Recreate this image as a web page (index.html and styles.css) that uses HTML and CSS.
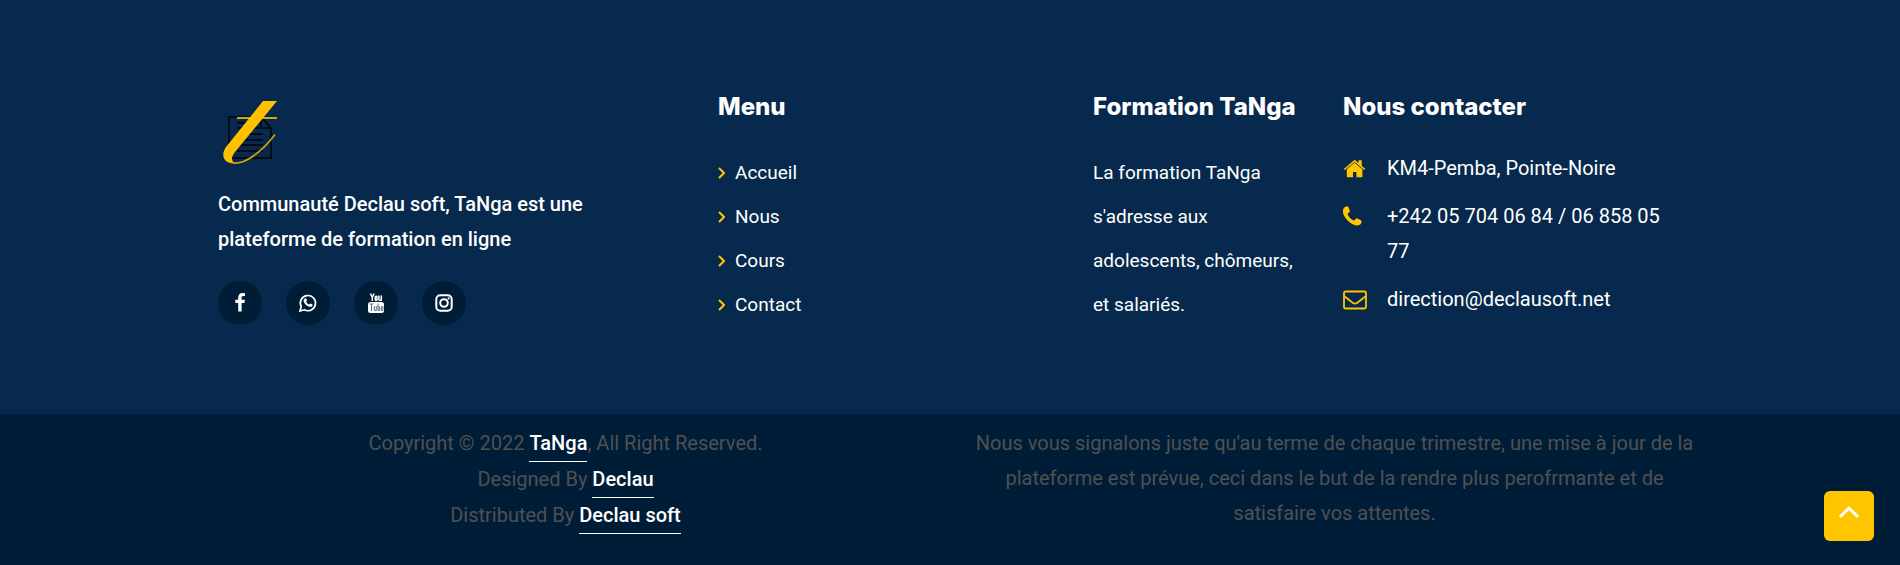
FILE: index.html
```html
<!DOCTYPE html>
<html lang="fr">
<head>
<meta charset="utf-8">
<meta name="viewport" content="width=device-width, initial-scale=1">
<title>TaNga</title>
<link rel="stylesheet" href="styles.css">
</head>
<body>
<footer class="footer">
  <div class="footer-top">
    <section class="about">
      <a class="logo" href="#" aria-label="TaNga">
        <svg width="80" height="80" viewBox="0 0 80 80">
          <g fill="none" stroke="#020b18" stroke-width="2">
            <path d="M19 67V26h32l10 11v30z"/>
            <path d="M51 26v11h10M27 32h20M27 37h25M27 43h26M27 49h26M27 54h26M27 60h26" stroke-width="2"/>
          </g>
          <path d="M27 27h40" stroke="#d9a506" stroke-width="2"/>
          <path d="M53 10h14L25 61c-4 5-4 9 0 11h-4c-8-1-10-9-5-16z" fill="#ffc000"/>
          <path d="M21 71.500c13 4 32-12 44-28" fill="none" stroke="#d9a506" stroke-width="1.600"/>
        </svg>
      </a>
      <p class="lead">Communauté Declau soft, TaNga est une plateforme de formation en ligne</p>
      <nav class="social" aria-label="Réseaux sociaux">
        <a href="#" aria-label="Facebook"><svg width="20" height="20" viewBox="0 0 1792 1792"><path fill="currentColor" d="M1343 12v264h-157q-86 0-116 36t-30 108v189h293l-39 296h-254v759H734V905H479V609h255V391q0-186 104-288.500T1115 0q147 0 228 12z"/></svg></a>
        <a href="#" aria-label="WhatsApp"><svg width="20" height="20" viewBox="0 0 20 20"><path d="M2 18l1.200-4.300A7.600 7.600 0 1 1 6.300 16.800z" fill="none" stroke="currentColor" stroke-width="1.700"/><path fill="currentColor" d="M7 5.500c.6-.4 1.200-.3 1.400.3l.6 1.500c.1.500-.6 1-.8 1.400.7 1.400 1.700 2.300 3.100 2.900.5-.2.900-1.200 1.500-1l1.600.8c.4.300.2 1.300-.3 1.800-1 .9-2.500.8-4 .1-2-.9-3.400-2.400-4.200-4.200-.6-1.500-.3-2.800 1.100-3.600z"/></svg></a>
        <a href="#" aria-label="YouTube"><svg width="20" height="20" viewBox="0 0 20 20"><g fill="none" stroke="currentColor" stroke-width="1.500"><path d="M4.500.5l1.800 4v3.500M8.100.5l-1.800 4"/><rect x="9.300" y="3.200" width="1.700" height="4.200" rx=".8"/><path d="M12.900 2.500v4q0 1 1 1l1.300-1M15.300 2.500v5.500"/></g><rect x="2" y="9" width="16" height="11" rx="2.500" fill="currentColor"/><g fill="none" stroke="#5c6f83" stroke-width="1"><path d="M3.500 11h4M5.500 11v7M8.300 13v4.500h2V13M12 10.500v7h1.600v-3.700H12M17 16.500v1h-1.700v-3.700H17v2h-1.700"/></g></svg></a>
        <a href="#" aria-label="Instagram"><svg width="20" height="20" viewBox="0 0 20 20"><g fill="none" stroke="currentColor" stroke-width="2"><rect x="2.300" y="2.300" width="15.400" height="15.400" rx="4"/><circle cx="10" cy="10" r="3.800"/></g><circle cx="14.600" cy="5.400" r="1.100" fill="currentColor"/></svg></a>
      </nav>
    </section>
    <section class="col">
      <h4>Menu</h4>
      <ul class="links">
        <li><a href="#"><svg width="7" height="12" viewBox="0 0 7 12"><path d="M1 1l5 5-5 5"/></svg>Accueil</a></li>
        <li><a href="#"><svg width="7" height="12" viewBox="0 0 7 12"><path d="M1 1l5 5-5 5"/></svg>Nous</a></li>
        <li><a href="#"><svg width="7" height="12" viewBox="0 0 7 12"><path d="M1 1l5 5-5 5"/></svg>Cours</a></li>
        <li><a href="#"><svg width="7" height="12" viewBox="0 0 7 12"><path d="M1 1l5 5-5 5"/></svg>Contact</a></li>
      </ul>
    </section>
    <section class="col">
      <h4>Formation TaNga</h4>
      <p class="formation">La formation TaNga s'adresse aux adolescents, chômeurs, et salariés.</p>
    </section>
    <section class="col">
      <h4>Nous contacter</h4>
      <ul class="contact">
        <li><svg width="24" height="24" viewBox="0 0 24 24" fill="currentColor"><path d="M11.500 5.800l-7.700 6.500v7.200q0 .8.800.8H10v-5.400h3.400v5.400h5.200q.8 0 .8-.8v-7.200z"/><path d="M.8 12L11.100 3.300q.6-.5 1.200 0L15.500 6V3.300h3.200v5.400l3.600 3.200-1 1.100L11.700 4.900 1.700 13z"/></svg><span>KM4-Pemba, Pointe-Noire</span></li>
        <li><svg width="24" height="24" viewBox="0 0 24 24" fill="currentColor"><path d="M2 2c1.800-1.200 3-1.200 3.600.4l1.200 3.400c.5 1.500-2.200 2.100-2.100 3.600 1 2.500 3.400 4.900 5.900 6 1.600.1 2.400-2.800 3.900-2l3.400 1.900c1.400.8.500 3.400-.7 4.200-2 1.200-4.300 1.300-7-.1C6 17.300 2.600 14.100.7 9.900-.7 6.300-.2 3.500 2 2z"/></svg><span>+242 05 704 06 84 / 06 858 05 77</span></li>
        <li><svg width="24" height="24" viewBox="0 0 24 24" fill="none" stroke="currentColor" stroke-width="1.800"><rect x="1" y="3.500" width="22" height="17" rx="1.500"/><path d="M1 8l9 7q2 1.300 4 0l9-7"/></svg><span>direction@declausoft.net</span></li>
      </ul>
    </section>
  </div>
  <div class="copyright">
    <div>
      <p>Copyright © 2022 <a href="#">TaNga</a>, All Right Reserved.</p>
      <p>Designed By <a href="#">Declau</a></p>
      <p>Distributed By <a href="#">Declau soft</a></p>
    </div>
    <p>Nous vous signalons juste qu'au terme de chaque trimestre, une mise à jour de la plateforme est prévue, ceci dans le but de la rendre plus perofrmante et de satisfaire vos attentes.</p>
  </div>
</footer>
<button class="to-top" type="button" aria-label="Haut de page"><svg width="24" height="24" viewBox="0 0 24 24"><path d="M3 15l9-9 9 9"/></svg></button>
</body>
</html>
```
FILE: styles.css
```css
* { box-sizing: border-box; }
body {
  margin: 0;
  background: #001d38;
  color: #505050;
  font: 400 20px/35px Roboto, sans-serif;
}
h4, p, ul { margin: 0; padding: 0; }
ul { list-style: none; }
a { color: inherit; text-decoration: none; }
.footer-top {
  display: grid;
  grid-template-columns: 4fr 3fr 2fr 3fr;
  padding: 91px 182px 87px 218px;
  background: #07294d;
  color: #fff;
}
.footer-top > section { min-width: 0; padding-right: 30px; }
.logo { display: block; width: 80px; height: 80px; margin-left: -8px; }
.lead { max-width: 400px; margin-top: 16px; font-weight: 500; }
.social { display: flex; gap: 24px; margin-top: 24px; }
.social a {
  display: flex;
  align-items: center;
  justify-content: center;
  width: 44px;
  height: 44px;
  border-radius: 50%;
  background: #001d38;
}
h4 {
  font: 800 24px/32px Inter, sans-serif;
  white-space: nowrap;
}
.links, .formation { margin-top: 28px; font-size: 19px; line-height: 44px; }
.links a { display: inline-flex; align-items: center; gap: 10px; }
.links svg { fill: none; stroke: #ffc600; stroke-width: 2; }
.contact { display: grid; gap: 13px; margin-top: 28px; }
.contact li { display: flex; gap: 20px; }
.contact svg { flex: none; margin-top: 6px; color: #ffc600; }
.contact span { max-width: 280px; }
.copyright {
  display: grid;
  grid-template-columns: 1fr 1fr;
  column-gap: 30px;
  padding: 12px 196px 26px;
  background: #001d38;
  text-align: center;
}
.copyright a {
  display: inline-block;
  border-bottom: 1px solid #fff;
  color: #fff;
  font-weight: 500;
}
.to-top {
  position: fixed;
  right: 26px;
  bottom: 24px;
  display: flex;
  align-items: center;
  justify-content: center;
  width: 50px;
  height: 50px;
  padding: 0 0 4px;
  border: 0;
  border-radius: 6px;
  background: #ffc600;
}
.to-top path { fill: none; stroke: #fff; stroke-width: 3; }
```
